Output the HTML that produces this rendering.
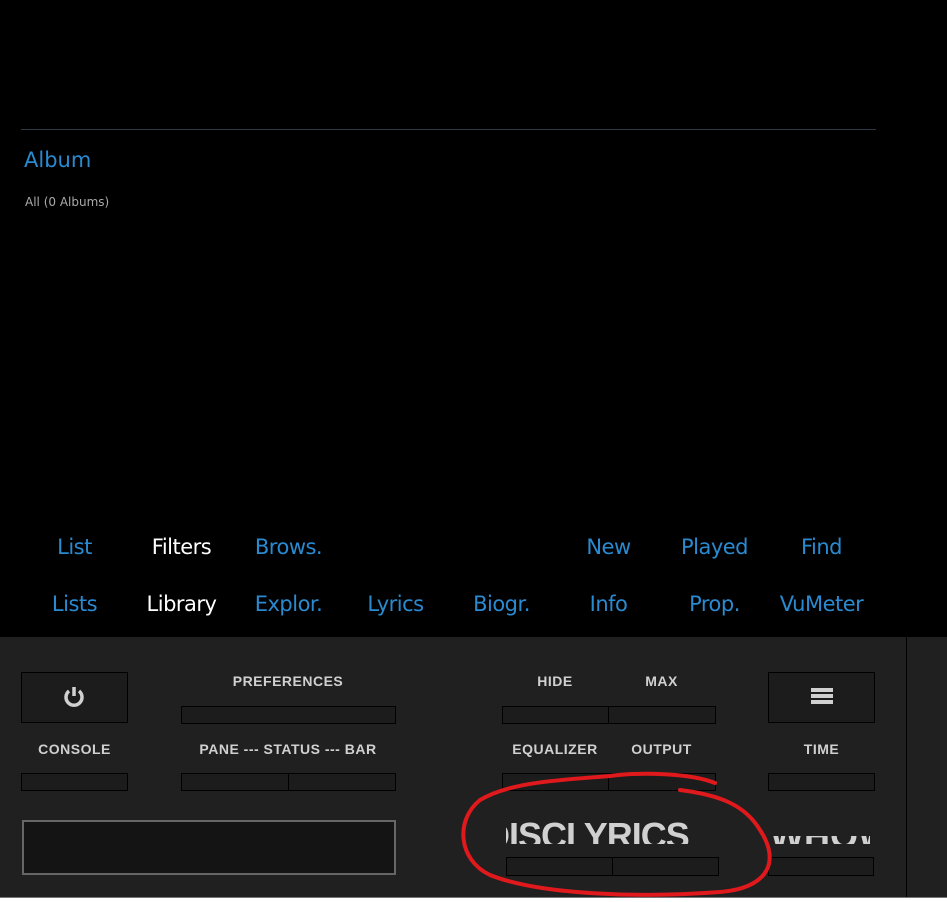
<!DOCTYPE html>
<html><head><style>
body{margin:0;width:947px;height:901px;background:#000;position:relative;overflow:hidden;font-family:"Liberation Sans",sans-serif}
.a{position:absolute}
.m{position:absolute;width:107px;text-align:center;font-size:21px;color:#2a8ad0;font-family:"DejaVu Sans","Liberation Sans",sans-serif;letter-spacing:-0.5px}
.w{color:#fff}
.b{position:absolute;box-sizing:border-box;border:1px solid #000;background:#1c1c1c}
.l{position:absolute;text-align:center;font-weight:bold;font-size:14px;letter-spacing:0.5px;color:#d0d0d0}
</style></head><body>
<div class="a" style="left:21px;top:129px;width:855px;height:1px;background:#2a3744"></div>
<div class="a" style="left:24px;top:148px;font-size:21px;color:#2a8ad0;font-family:'DejaVu Sans',sans-serif">Album</div>
<div class="a" style="left:25px;top:195px;font-size:12px;color:#aaa;font-family:'DejaVu Sans',sans-serif">All (0 Albums)</div>

<div class="m" style="left:21px;top:535px">List</div>
<div class="m w" style="left:128px;top:535px">Filters</div>
<div class="m" style="left:235px;top:535px">Brows.</div>
<div class="m" style="left:555px;top:535px">New</div>
<div class="m" style="left:661px;top:535px">Played</div>
<div class="m" style="left:768px;top:535px">Find</div>
<div class="m" style="left:21px;top:592px">Lists</div>
<div class="m w" style="left:128px;top:592px">Library</div>
<div class="m" style="left:235px;top:592px">Explor.</div>
<div class="m" style="left:342px;top:592px">Lyrics</div>
<div class="m" style="left:448px;top:592px">Biogr.</div>
<div class="m" style="left:555px;top:592px">Info</div>
<div class="m" style="left:661px;top:592px">Prop.</div>
<div class="m" style="left:768px;top:592px">VuMeter</div>

<div class="a" style="left:0;top:637px;width:947px;height:260px;background:#202020"></div>
<div class="a" style="left:906px;top:637px;width:1px;height:260px;background:#000"></div>
<div class="a" style="left:0;top:897px;width:947px;height:4px;background:#fff;border-top:1px solid #777"></div>

<div class="b" style="left:21px;top:672px;width:107px;height:51px"></div>
<svg class="a" style="left:62px;top:685px" width="24" height="24" viewBox="0 0 24 24"><path d="M7 6 A8 8 0 1 0 17 6" fill="none" stroke="#d0d0d0" stroke-width="3.5"/><line x1="12" y1="2" x2="12" y2="11" stroke="#d0d0d0" stroke-width="3.5"/></svg>
<div class="b" style="left:768px;top:672px;width:107px;height:51px"></div>
<div class="a" style="left:811px;top:688px;width:22px;height:4px;background:#d0d0d0;box-shadow:0 6px 0 #d0d0d0,0 12px 0 #d0d0d0"></div>

<div class="l" style="left:181px;top:673px;width:214px">PREFERENCES</div>
<div class="l" style="left:502px;top:673px;width:106px">HIDE</div>
<div class="l" style="left:608px;top:673px;width:107px">MAX</div>
<div class="l" style="left:21px;top:741px;width:107px">CONSOLE</div>
<div class="l" style="left:181px;top:741px;width:214px">PANE --- STATUS --- BAR</div>
<div class="l" style="left:502px;top:741px;width:106px">EQUALIZER</div>
<div class="l" style="left:608px;top:741px;width:107px">OUTPUT</div>
<div class="l" style="left:768px;top:741px;width:107px">TIME</div>

<div class="b" style="left:181px;top:706px;width:215px;height:18px"></div>
<div class="b" style="left:502px;top:706px;width:107px;height:18px"></div>
<div class="b" style="left:608px;top:706px;width:108px;height:18px"></div>
<div class="b" style="left:21px;top:773px;width:107px;height:18px"></div>
<div class="b" style="left:181px;top:773px;width:108px;height:18px"></div>
<div class="b" style="left:288px;top:773px;width:108px;height:18px"></div>
<div class="b" style="left:502px;top:773px;width:107px;height:18px"></div>
<div class="b" style="left:608px;top:773px;width:108px;height:18px"></div>
<div class="b" style="left:768px;top:773px;width:107px;height:18px"></div>
<div class="b" style="left:506px;top:857px;width:107px;height:19px"></div>
<div class="b" style="left:612px;top:857px;width:107px;height:19px"></div>
<div class="b" style="left:768px;top:857px;width:106px;height:19px"></div>
<div class="a" style="left:22px;top:820px;width:374px;height:55px;box-sizing:border-box;border:2px solid #666;background:#141414"></div>

<div class="a" style="left:506px;top:820px;width:212px;height:24px;overflow:hidden"><div style="font-weight:bold;font-size:36px;color:#d0d0d0;white-space:nowrap;margin-left:-22px;margin-top:-2px;line-height:36px;letter-spacing:-1px">DISCLYRICS</div></div>
<div class="a" style="left:770px;top:836px;width:100px;height:8px;overflow:hidden"><div style="font-weight:bold;font-size:36px;color:#d0d0d0;white-space:nowrap;margin-top:-18px;line-height:36px">WHOW</div></div>

<svg class="a" style="left:0;top:0" width="947" height="901"><path d="M715 783 C690 773 640 772 610 776 C560 780 510 782 480 800 C455 820 458 860 490 875 C540 895 640 898 720 892 C770 888 780 860 760 830 C745 805 720 795 680 790" fill="none" stroke="#e0191c" stroke-width="4" stroke-linecap="round"/></svg>
</body></html>
